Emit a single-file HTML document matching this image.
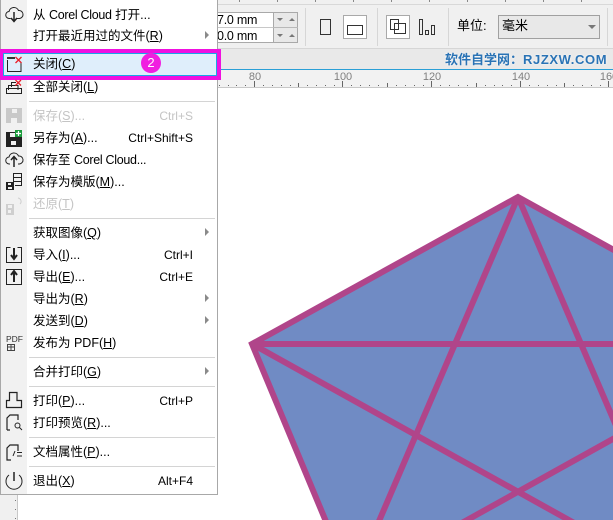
<!DOCTYPE html>
<html lang="zh"><head><meta charset="utf-8"><title>CorelDRAW</title>
<style>
html,body{margin:0;padding:0;background:#fff;width:613px;height:520px;overflow:hidden}
#p{position:relative;width:613px;height:520px;overflow:hidden;background:#fff;font-family:"Liberation Sans","Noto Sans CJK SC",sans-serif;color:#000}
.a{position:absolute}
.r{position:absolute;left:33px;font-size:12.5px;line-height:18px;height:18px;white-space:nowrap;margin-top:-8px;color:#000}
.s{position:absolute;right:420px;font-size:12px;line-height:18px;margin-top:-8px;white-space:nowrap;color:#000}
.r.d,.s.d{color:#c4c4c4}
.n{letter-spacing:-.25px}
.sep{position:absolute;left:29px;width:186px;height:1px;background:#d4d4d4}
.t{position:absolute;width:0;height:0;border-top:4px solid transparent;border-bottom:4px solid transparent;border-left:4px solid #8a8a8a;left:205px;margin-top:-4px}
u{text-underline-offset:1px}
.l{position:absolute;top:71px;font-size:11px;line-height:12px;color:#808080;transform:translateX(-50%)}
</style></head><body><div id="p">

<!-- top toolbar -->
<div class="a" style="left:217px;top:0;width:396px;height:5px;background:#f0f0f0;border-bottom:1px solid #d8d8d8;box-sizing:border-box"></div>
<div class="a" style="left:217px;top:5px;width:396px;height:43px;background:#f0f0f0"></div>
<div class="a" style="left:217px;top:48px;width:396px;height:21px;background:#e9e9e9;border-top:1px solid #d6d6d6;box-sizing:border-box"></div>
<div class="a" style="left:217px;top:69px;width:396px;height:1px;background:#2a9fd6"></div>
<div class="a" style="left:217px;top:70px;width:396px;height:18px;background:#f2f2f2;border-bottom:1px solid #c8c8c8;box-sizing:border-box"></div>

<!-- inputs -->
<div class="a" style="left:217px;top:12px;width:56px;height:31px;background:#fff;border:solid #a9a9a9;border-width:1px 0;box-sizing:border-box"></div>
<div class="a" style="left:217px;top:27px;width:56px;height:1px;background:#c8c8c8"></div>
<div class="a" style="left:273px;top:12px;width:25px;height:31px;background:#e8e8e8;border:1px solid #a9a9a9;box-sizing:border-box"></div>
<div class="a" style="left:273px;top:27px;width:25px;height:1px;background:#b8b8b8"></div>
<div class="a n" style="left:217px;top:12px;font-size:12.5px;line-height:16px;color:#000">7.0 mm</div>
<div class="a n" style="left:217px;top:28px;font-size:12.5px;line-height:16px;color:#000">0.0 mm</div>

<svg class="a" style="left:0;top:0" width="613" height="520" viewBox="0 0 613 520">
<g fill="#777"><path d="M277 18h6l-3 3zM289 21h6l-3-3zM277 34h6l-3 3zM289 37h6l-3-3z"/></g>
<g fill="#d6d6d6"><rect x="305" y="8" width="1" height="38"/><rect x="377" y="8" width="1" height="38"/><rect x="448" y="8" width="1" height="38"/><rect x="607" y="8" width="1" height="38"/></g>
<rect x="320.500" y="19.500" width="10" height="15" fill="none" stroke="#333" stroke-width="1"/>
<rect x="343.500" y="15.500" width="23" height="23" fill="#fff" stroke="#a9a9a9"/>
<rect x="347.500" y="25.500" width="15" height="9" fill="none" stroke="#333"/>
<rect x="386.500" y="15.500" width="23" height="23" fill="#fff" stroke="#a9a9a9"/>
<rect x="390.500" y="19.500" width="8" height="10" fill="#fff" stroke="#333"/>
<rect x="394.500" y="23.500" width="11" height="10" fill="none" stroke="#333"/>
<rect x="419.500" y="19.500" width="3" height="15" fill="none" stroke="#333"/>
<rect x="425.500" y="30.500" width="3" height="4" fill="none" stroke="#333"/>
<rect x="431.500" y="25.500" width="3" height="9" fill="none" stroke="#333"/>
<rect x="498.500" y="15.500" width="101" height="23" fill="#e8e8e8" stroke="#a0a0a0"/>
<path d="M588 25h8l-4 4z" fill="#777"/>
<!-- top ticks -->
<g fill="#888"><rect x="239" y="0" width="1" height="2"/><rect x="277" y="0" width="1" height="2"/><rect x="315" y="0" width="1" height="2"/><rect x="353" y="0" width="1" height="2"/><rect x="391" y="0" width="1" height="2"/><rect x="429" y="0" width="1" height="2"/><rect x="467" y="0" width="1" height="2"/><rect x="505" y="0" width="1" height="2"/><rect x="543" y="0" width="1" height="2"/><rect x="581" y="0" width="1" height="2"/></g>
<!-- ruler ticks -->
<g fill="#666">
<rect x="254" y="81" width="1" height="6"/><rect x="342" y="81" width="1" height="6"/><rect x="431" y="81" width="1" height="6"/><rect x="520" y="81" width="1" height="6"/><rect x="608" y="81" width="1" height="6"/>
<rect x="298" y="83" width="1" height="4"/><rect x="387" y="83" width="1" height="4"/><rect x="476" y="83" width="1" height="4"/><rect x="564" y="83" width="1" height="4"/>
<path d="M219 85h1v1h-1zM228 85h1v1h-1zM236 85h1v1h-1zM245 85h1v1h-1zM263 85h1v1h-1zM272 85h1v1h-1zM281 85h1v1h-1zM290 85h1v1h-1zM307 85h1v1h-1zM316 85h1v1h-1zM325 85h1v1h-1zM334 85h1v1h-1zM351 85h1v1h-1zM360 85h1v1h-1zM369 85h1v1h-1zM378 85h1v1h-1zM396 85h1v1h-1zM405 85h1v1h-1zM414 85h1v1h-1zM423 85h1v1h-1zM440 85h1v1h-1zM449 85h1v1h-1zM458 85h1v1h-1zM467 85h1v1h-1zM485 85h1v1h-1zM494 85h1v1h-1zM502 85h1v1h-1zM511 85h1v1h-1zM529 85h1v1h-1zM538 85h1v1h-1zM547 85h1v1h-1zM556 85h1v1h-1zM573 85h1v1h-1zM582 85h1v1h-1zM591 85h1v1h-1zM600 85h1v1h-1z"/>
</g>
<!-- pentagon -->
<polygon points="518,197 252,344 329.500,530 620,530 620,253.400" fill="#708bc4" stroke="#b0458a" stroke-width="6" stroke-linejoin="miter"/>
<g stroke="#b0458a" stroke-width="6" fill="none"><path d="M252 344H620M518 197L375.200 530M518 197L620 434.800M252 344L586.800 530M620 435.100L449.200 530"/></g>
</svg>

<div class="a" style="left:457px;top:17px;font-size:13px;line-height:18px;color:#000">单位:</div>
<div class="a" style="left:502px;top:17px;font-size:13px;line-height:18px;color:#000">毫米</div>
<div class="a" style="left:445px;top:52px;font-size:13px;line-height:16px;font-weight:bold;color:#2a73b5;white-space:nowrap;text-shadow:0 0 2px #fff">软件自学网：<span style="letter-spacing:.6px">RJZXW.COM</span></div>
<div class="l" style="left:255px">80</div><div class="l" style="left:343px">100</div><div class="l" style="left:432px">120</div><div class="l" style="left:521px">140</div><div class="l" style="left:609px">160</div>

<!-- left ruler below menu -->
<div class="a" style="left:0;top:495px;width:17px;height:25px;background:#f0f0f0;border-right:1px solid #c8c8c8"></div>
<div class="a" style="left:15px;top:500px;width:1px;height:1px;background:#777"></div>
<div class="a" style="left:15px;top:509px;width:1px;height:1px;background:#777"></div>
<div class="a" style="left:15px;top:518px;width:1px;height:1px;background:#777"></div>

<!-- menu -->
<div class="a" style="left:0;top:0;width:218px;height:495px;background:#fff;border-right:1px solid #a8a8a8;border-bottom:1px solid #a8a8a8;border-left:1px solid #a8a8a8;box-sizing:border-box"></div>
<div class="a" style="left:1px;top:0;width:26px;height:494px;background:#f1f1f1"></div>

<div class="sep" style="top:101px"></div><div class="sep" style="top:218px"></div><div class="sep" style="top:357px"></div><div class="sep" style="top:386px"></div><div class="sep" style="top:437px"></div><div class="sep" style="top:466px"></div>

<!-- highlight -->
<div class="a" style="left:0;top:49px;width:221px;height:31px;border:4px solid #f010e0;border-left-width:3px;box-sizing:border-box;background:#dfeefb"></div>
<div class="a" style="left:3px;top:53px;width:214px;height:23px;border:1px solid #19a5e6;box-sizing:border-box"></div>
<div class="a" style="left:141px;top:53px;width:20px;height:20px;border-radius:50%;background:#f01fe0;color:#fff;font-size:13px;line-height:20px;text-align:center">2</div>

<div class="r" style="top:14px">从 <span style="letter-spacing:-.3px">Corel Cloud</span> 打开...</div>
<div class="r" style="top:35px">打开最近用过的文件(<u>R</u>)</div><div class="t" style="top:35px"></div>
<div class="r" style="top:63px">关闭(<u>C</u>)</div>
<div class="r" style="top:86px">全部关闭(<u>L</u>)</div>
<div class="r d" style="top:115px">保存(<u>S</u>)...</div><div class="s d" style="top:115px">Ctrl+S</div>
<div class="r" style="top:137px">另存为(<u>A</u>)...</div><div class="s" style="top:137px">Ctrl+Shift+S</div>
<div class="r" style="top:159px">保存至 <span style="letter-spacing:-.3px">Corel Cloud...</span></div>
<div class="r" style="top:181px">保存为模版(<u>M</u>)...</div>
<div class="r d" style="top:203px">还原(<u>T</u>)</div>
<div class="r" style="top:232px">获取图像(<u>Q</u>)</div><div class="t" style="top:232px"></div>
<div class="r" style="top:254px">导入(<u>I</u>)...</div><div class="s" style="top:254px">Ctrl+I</div>
<div class="r" style="top:276px">导出(<u>E</u>)...</div><div class="s" style="top:276px">Ctrl+E</div>
<div class="r" style="top:298px">导出为(<u>R</u>)</div><div class="t" style="top:298px"></div>
<div class="r" style="top:320px">发送到(<u>D</u>)</div><div class="t" style="top:320px"></div>
<div class="r" style="top:342px">发布为 PDF(<u>H</u>)</div>
<div class="r" style="top:371px">合并打印(<u>G</u>)</div><div class="t" style="top:371px"></div>
<div class="r" style="top:400px">打印(<u>P</u>)...</div><div class="s" style="top:400px">Ctrl+P</div>
<div class="r" style="top:422px">打印预览(<u>R</u>)...</div>
<div class="r" style="top:451px">文档属性(<u>P</u>)...</div>
<div class="r" style="top:480px">退出(<u>X</u>)</div><div class="s" style="top:480px">Alt+F4</div>

<!-- icons -->
<svg class="a" style="left:0;top:0" width="30" height="500" viewBox="0 0 30 500">
<g fill="none" stroke="#222" stroke-width="1">
<path d="M10.500 18.500H9.500a3.500 3.500 0 0 1-.5-7 5 5 0 0 1 9.500-1 4 4 0 0 1 1 8H17"/>
<path d="M14 12v9M11 18l3 3.500 3-3.500" stroke-width="1.500"/>
<path d="M7.500 60v11.500H21V63"/>
<path d="M11.500 87V82.500H16M8.500 90v-4.500H18V90M6.500 93.500v-5h15v5z"/>
<path d="M10 164H9.500a3.500 3.500 0 0 1-.5-7 5 5 0 0 1 9.500-1 4 4 0 0 1 1 8H18"/>
<path d="M14 167v-10M11 160l3-3.500 3 3.500" stroke-width="1.500"/>
<path d="M13.500 183v-9.500h8v12H15M14 177.500h7M14 181.500h7"/>
<path d="M10.500 247.500H6.500v15h15v-15H17.500"/>
<path d="M14 248v10M11 255l3 4 3-4" stroke-width="2"/>
<rect x="6.500" y="269.500" width="15" height="15"/>
<path d="M14 282v-10M11 275l3-4 3 4" stroke-width="2"/>
<path d="M9.500 400.500V392.500H17V400.500H21.500V407.500H6.500V400.500Z" stroke-width="1.200"/>
<path d="M7 430v-12l3-3h8v5M7 430h3" stroke-width="1.200"/>
<circle cx="17.500" cy="425.500" r="2.500"/><path d="M19.500 427.500l2.500 2.500"/>
<path d="M11 460H7v-12l3-3h8v6" stroke-width="1.200"/>
<path d="M15 451l-2 5M17 452.500h5M17 456h5"/>
<path d="M9 475a8 8 0 1 0 10 0"/>
<path d="M14 472v9" stroke-width="1.500"/>
</g>
<!-- red x -->
<path d="M15.500 57l6 6M21.500 57l-6 6M15.500 80l5.500 5.500M21 80l-5.500 5.500" stroke="#e81e2a" stroke-width="1.300" fill="none"/>
<rect x="7" y="57" width="8" height="2" fill="#333"/>
<!-- disabled save -->
<path d="M6 108h16v15H6z" fill="#c9c9c9"/><rect x="12" y="109" width="5" height="4" fill="#f1f1f1"/><rect x="11" y="118" width="6" height="5" fill="#f1f1f1"/>
<!-- save as -->
<path d="M6 132h16v15H6z" fill="#222"/><rect x="10" y="133" width="6" height="4" fill="#f1f1f1"/><rect x="11" y="141" width="5" height="4" fill="#f1f1f1"/>
<rect x="15" y="130" width="7" height="7" fill="#1a9c3c"/><path d="M18.500 131v5M16 133.500h5" stroke="#fff" stroke-width="1.200"/>
<!-- template save -->
<path d="M6 182h8v8H6z" fill="#222"/><rect x="8" y="183" width="3" height="2" fill="#f1f1f1"/><rect x="8" y="187" width="4" height="2" fill="#f1f1f1"/>
<!-- revert -->
<path d="M6 204h8v11H6z" fill="#cfcfcf"/><rect x="8" y="205" width="4" height="3" fill="#f1f1f1"/><rect x="8" y="210" width="3" height="3" fill="#f1f1f1"/>
<path d="M18 198a3.500 3.500 0 0 1 2 6" stroke="#cfcfcf" fill="none"/>
<text x="6" y="342" font-family="Liberation Sans,sans-serif" font-size="8.500" fill="#333">PDF</text>
<rect x="7.500" y="344.500" width="7" height="6" fill="none" stroke="#444"/><path d="M11 344v6M8 347h6" stroke="#444"/>
</svg>
</div></body></html>
